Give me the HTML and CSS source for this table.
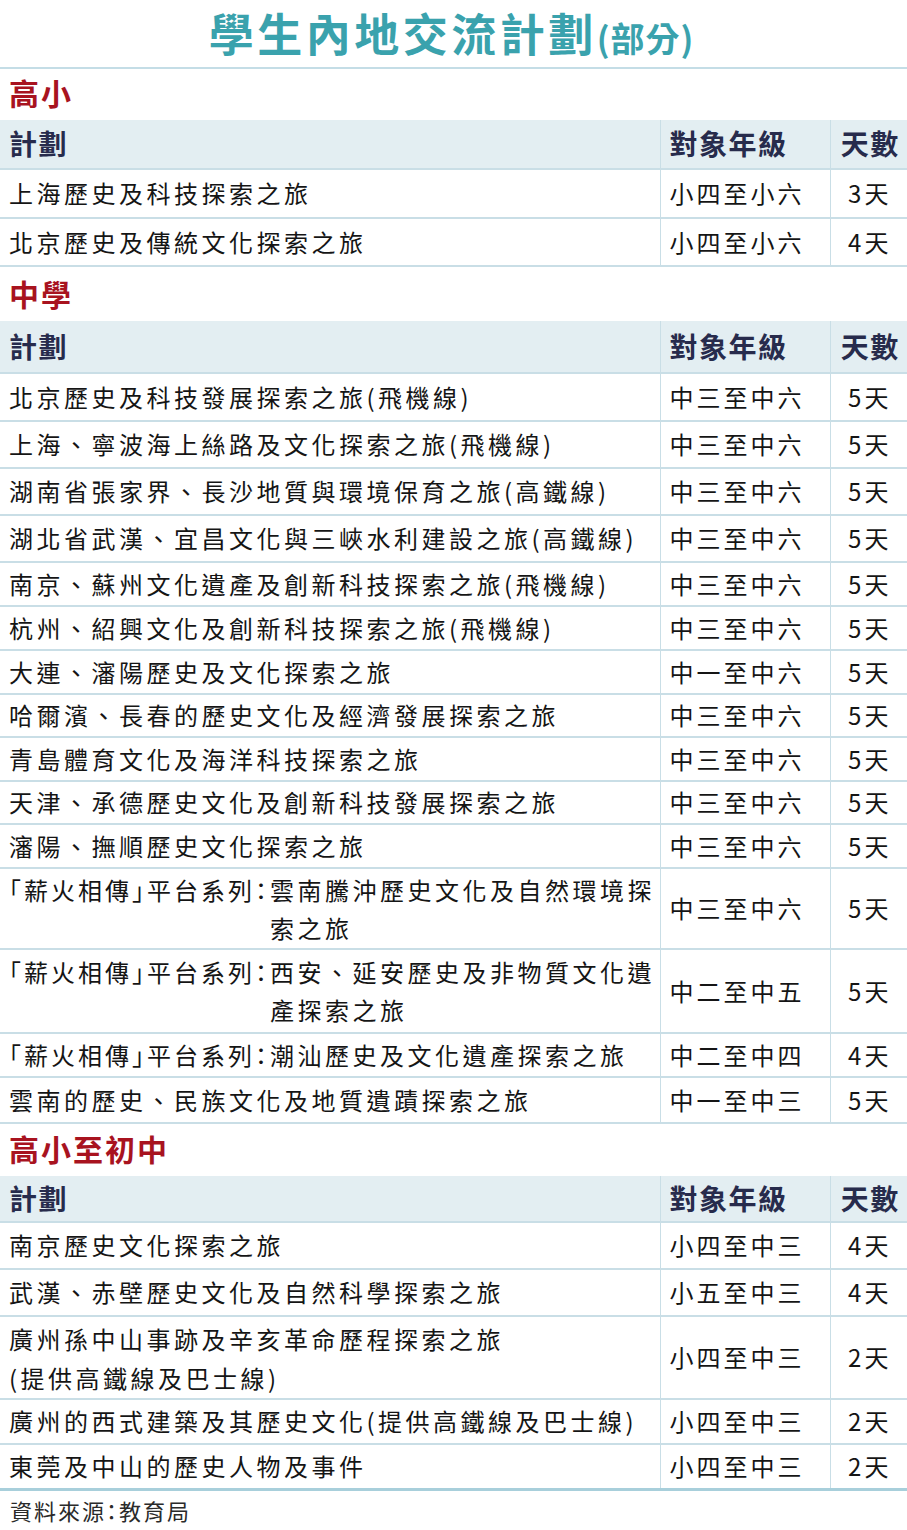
FILE: index.html
```html
<!DOCTYPE html>
<html lang="zh-Hant">
<head>
<meta charset="utf-8">
<title>學生內地交流計劃(部分)</title>
<link rel="stylesheet" href="styles.css">
</head>
<body>
<div class="page">
  <h1 class="title"><span class="title-main">學生內地交流計劃</span><span class="title-sub">(部分)</span></h1>

  <h2 class="sec">高小</h2>
  <table class="tbl">
    <colgroup><col class="c1"><col class="c2"><col class="c3"></colgroup>
    <tr class="head h49"><th>計劃</th><th>對象年級</th><th class="ctr">天數</th></tr>
    <tr class="h49"><td>上海歷史及科技探索之旅</td><td>小四至小六</td><td class="ctr">3天</td></tr>
    <tr class="h48"><td>北京歷史及傳統文化探索之旅</td><td>小四至小六</td><td class="ctr">4天</td></tr>
  </table>

  <h2 class="sec sec-mid">中學</h2>
  <table class="tbl">
    <colgroup><col class="c1"><col class="c2"><col class="c3"></colgroup>
    <tr class="head h52"><th>計劃</th><th>對象年級</th><th class="ctr">天數</th></tr>
    <tr class="h48"><td>北京歷史及科技發展探索之旅(飛機線)</td><td>中三至中六</td><td class="ctr">5天</td></tr>
    <tr class="h47"><td>上海、寧波海上絲路及文化探索之旅(飛機線)</td><td>中三至中六</td><td class="ctr">5天</td></tr>
    <tr class="h47"><td>湖南省張家界、長沙地質與環境保育之旅(高鐵線)</td><td>中三至中六</td><td class="ctr">5天</td></tr>
    <tr class="h47"><td>湖北省武漢、宜昌文化與三峽水利建設之旅(高鐵線)</td><td>中三至中六</td><td class="ctr">5天</td></tr>
    <tr class="h44"><td>南京、蘇州文化遺產及創新科技探索之旅(飛機線)</td><td>中三至中六</td><td class="ctr">5天</td></tr>
    <tr class="h44"><td>杭州、紹興文化及創新科技探索之旅(飛機線)</td><td>中三至中六</td><td class="ctr">5天</td></tr>
    <tr class="h44"><td>大連、瀋陽歷史及文化探索之旅</td><td>中一至中六</td><td class="ctr">5天</td></tr>
    <tr class="h43"><td>哈爾濱、長春的歷史文化及經濟發展探索之旅</td><td>中三至中六</td><td class="ctr">5天</td></tr>
    <tr class="h44"><td>青島體育文化及海洋科技探索之旅</td><td>中三至中六</td><td class="ctr">5天</td></tr>
    <tr class="h43"><td>天津、承德歷史文化及創新科技發展探索之旅</td><td>中三至中六</td><td class="ctr">5天</td></tr>
    <tr class="h44"><td>瀋陽、撫順歷史文化探索之旅</td><td>中三至中六</td><td class="ctr">5天</td></tr>
    <tr class="h81"><td><div class="hang"><span class="pre">「薪火相傳」平台系列：</span><span class="rest">雲南騰沖歷史文化及自然環境探索之旅</span></div></td><td>中三至中六</td><td class="ctr">5天</td></tr>
    <tr class="h84"><td><div class="hang"><span class="pre">「薪火相傳」平台系列：</span><span class="rest">西安、延安歷史及非物質文化遺產探索之旅</span></div></td><td>中二至中五</td><td class="ctr">5天</td></tr>
    <tr class="h44"><td><span class="pre">「薪火相傳」平台系列：</span>潮汕歷史及文化遺產探索之旅</td><td>中二至中四</td><td class="ctr">4天</td></tr>
    <tr class="h46"><td>雲南的歷史、民族文化及地質遺蹟探索之旅</td><td>中一至中三</td><td class="ctr">5天</td></tr>
  </table>

  <h2 class="sec sec-low">高小至初中</h2>
  <table class="tbl tbl-last">
    <colgroup><col class="c1"><col class="c2"><col class="c3"></colgroup>
    <tr class="head h46"><th>計劃</th><th>對象年級</th><th class="ctr">天數</th></tr>
    <tr class="h47"><td>南京歷史文化探索之旅</td><td>小四至中三</td><td class="ctr">4天</td></tr>
    <tr class="h47"><td>武漢、赤壁歷史文化及自然科學探索之旅</td><td>小五至中三</td><td class="ctr">4天</td></tr>
    <tr class="h83"><td class="two">廣州孫中山事跡及辛亥革命歷程探索之旅<br>(提供高鐵線及巴士線)</td><td>小四至中三</td><td class="ctr">2天</td></tr>
    <tr class="h45"><td>廣州的西式建築及其歷史文化(提供高鐵線及巴士線)</td><td>小四至中三</td><td class="ctr">2天</td></tr>
    <tr class="h45"><td>東莞及中山的歷史人物及事件</td><td>小四至中三</td><td class="ctr">2天</td></tr>
  </table>

  <p class="source">資料來源<span class="colon">：</span>教育局</p>
</div>
</body>
</html>
```

FILE: styles.css
```css
html, body {
  margin: 0;
  padding: 0;
  background: #ffffff;
}

body {
  font-family: "Noto Sans CJK TC", "Noto Sans", "Liberation Sans", sans-serif;
  color: #151515;
}

.page {
  width: 907px;
}

.title {
  margin: 0;
  height: 67px;
  border-bottom: 2px solid #c4dde6;
  display: flex;
  justify-content: center;
  align-items: baseline;
  padding-right: 4px;
  font-size: 45px;
  font-weight: 700;
  color: #3aa2ad;
  line-height: normal;
  white-space: nowrap;
}

.title-main {
  letter-spacing: 3.5px;
}

.title-sub {
  font-size: 34px;
  letter-spacing: 1px;
}

.sec {
  margin: 0;
  height: 51px;
  box-sizing: border-box;
  display: flex;
  align-items: center;
  padding: 0 0 5px 9px;
  font-size: 30px;
  font-weight: 700;
  letter-spacing: 2px;
  color: #a8131f;
  line-height: 1.2;
}

.sec-mid { height: 54px; padding-bottom: 3px; }
.sec-low { height: 52px; padding-bottom: 4px; }

.tbl {
  width: 907px;
  border-collapse: collapse;
  table-layout: fixed;
}

.c1 { width: 660px; }
.c2 { width: 170px; }
.c3 { width: 77px; }

.tbl th,
.tbl td {
  padding: 0 0 0 9px;
  vertical-align: middle;
  text-align: left;
  border-bottom: 2px solid #c9dee6;
  line-height: 1.2;
  white-space: nowrap;
}

.tbl th + th,
.tbl td + td {
  border-left: 1px solid #c9dee6;
}

.tbl td {
  font-size: 24px;
  letter-spacing: 3.5px;
  font-weight: 400;
}

.tbl td + td {
  letter-spacing: 3px;
}

.tbl th {
  font-size: 28px;
  font-weight: 700;
  letter-spacing: 1.5px;
  color: #272b4c;
  background: #e3eef2;
}

.tbl .ctr {
  text-align: center;
  padding-left: 3px;
}

.tbl td.ctr { padding-left: 2px; }

.tbl-last tr:last-child td {
  border-bottom: 3px solid #a8cfdb;
}

.hang {
  display: flex;
  align-items: flex-start;
}

.pre {
  font-feature-settings: "halt";
  letter-spacing: 3px;
  white-space: nowrap;
  flex: none;
}

.rest {
  white-space: normal;
  line-height: 38px;
  width: 392px;
}

.hang .pre { line-height: 38px; }

.two { line-height: 39px !important; white-space: normal; }

.h43 { height: 43px; }
.h44 { height: 44px; }
.h45 { height: 45px; }
.h46 { height: 46px; }
.h47 { height: 47px; }
.h48 { height: 48px; }
.h49 { height: 49px; }
.h50 { height: 50px; }
.h52 { height: 52px; }
.h81 { height: 81px; }
.h83 { height: 83px; }
.h84 { height: 84px; }

.source {
  margin: 0;
  height: 38px;
  display: flex;
  align-items: center;
  padding-left: 10px;
  font-size: 22px;
  letter-spacing: 2px;
  color: #2a2a2a;
  font-weight: 400;
}

.colon { font-feature-settings: "halt"; }
```
